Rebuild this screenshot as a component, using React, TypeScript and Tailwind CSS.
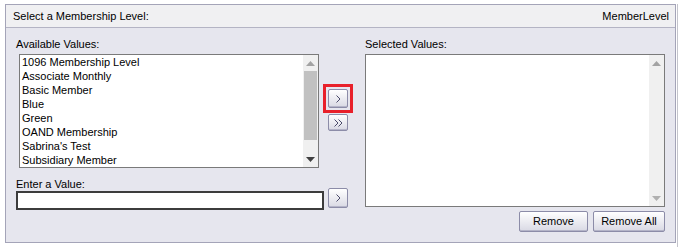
const available = [
  "1096 Membership Level",
  "Associate Monthly",
  "Basic Member",
  "Blue",
  "Green",
  "OAND Membership",
  "Sabrina's Test",
  "Subsidiary Member",
];

function Btn({ children, className = "" }: { children: React.ReactNode; className?: string }) {
  return (
    <button
      className={`flex items-center justify-center rounded-[2px] border border-[#8c8ca8] bg-gradient-to-b from-white to-[#d9d9e4] text-[11px] leading-none text-black shadow-[inset_0_-1px_0_#b4b4c8] ${className}`}
    >
      {children}
    </button>
  );
}

function Chevron() {
  return (
    <svg width="5" height="8" viewBox="0 0 5 8">
      <path d="M0.5 0.5 L4 4 L0.5 7.5" fill="none" stroke="#4a4a6a" strokeWidth="1" />
    </svg>
  );
}

function DoubleChevron() {
  return (
    <svg width="9" height="8" viewBox="0 0 9 8">
      <path d="M0.5 0.5 L4 4 L0.5 7.5 M4.5 0.5 L8 4 L4.5 7.5" fill="none" stroke="#4a4a6a" strokeWidth="1" />
    </svg>
  );
}

function ScrollBar({ active }: { active?: boolean }) {
  return (
    <div className="flex w-[15px] flex-col items-center bg-[#f0f0f0]">
      <div className="flex h-[16px] items-center justify-center">
        <svg width="9" height="5" viewBox="0 0 9 5">
          <path d="M0 5 L4.5 0 L9 5 Z" fill="#a3a3a3" />
        </svg>
      </div>
      <div className="flex-1 w-full px-[1px]">
        {active && <div className="h-[69px] w-full bg-[#c1c1c1]" />}
      </div>
      <div className="flex h-[16px] items-center justify-center">
        <svg width="9" height="5" viewBox="0 0 9 5">
          <path d="M0 0 L9 0 L4.5 5 Z" fill={active ? "#404040" : "#b0b0b0"} />
        </svg>
      </div>
    </div>
  );
}

export default function App() {
  return (
    <div
      className="flex h-[247px] w-[681px] items-start bg-white pl-[5px] pt-[4px] text-black"
      style={{ fontFamily: '"Liberation Sans", Arial, sans-serif' }}
    >
      <div className="flex h-[239px] w-[671px] flex-col border border-[#a4a4b8]">
        <div className="flex h-[23px] items-center justify-between border-b border-[#b4b4c4] bg-[#f0f0f2] pl-[7px] pr-[6px] text-[11px]">
          <span>Select a Membership Level:</span>
          <span>MemberLevel</span>
        </div>

        <div className="flex flex-1 bg-[#e6e6ee] pl-[10px] pt-[9px]">
          {/* left side */}
          <div className="w-[349px]">
            <div className="mb-[3px] h-[14px] text-[11px] leading-[14px]">Available Values:</div>
            <div className="flex">
              <div className="ml-[3px] flex h-[114px] w-[300px] border border-[#7a7a7a] bg-white">
                <div className="flex-1 pl-[2px] text-[11px] leading-[14px]">
                  {available.map((v) => (
                    <div key={v}>{v}</div>
                  ))}
                </div>
                <ScrollBar active />
              </div>
              <div className="ml-[4px] flex flex-col pt-[30px]">
                <div className="border-[3px] border-[#e8202a] p-[2px]">
                  <Btn className="h-[19px] w-[20px]">
                    <Chevron />
                  </Btn>
                </div>
                <Btn className="ml-[5px] mt-[1px] h-[17px] w-[20px]">
                  <DoubleChevron />
                </Btn>
              </div>
            </div>
            <div className="mt-[10px] h-[13px] text-[11px] leading-[13px]">Enter a Value:</div>
            <div className="flex items-start">
              <input className="h-[19px] w-[308px] border-2 border-[#3c3c3c] bg-white outline-none" />
              <Btn className="-mt-[3px] ml-[4px] h-[20px] w-[20px]">
                <Chevron />
              </Btn>
            </div>
          </div>

          {/* right side */}
          <div className="w-[301px]">
            <div className="mb-[3px] h-[14px] text-[11px] leading-[14px]">Selected Values:</div>
            <div className="flex h-[153px] w-[300px] border border-[#7a7a7a] bg-white">
              <div className="flex-1" />
              <ScrollBar />
            </div>
            <div className="mt-[4px] flex justify-end gap-[5px] pr-[1px]">
              <Btn className="h-[21px] w-[69px]">Remove</Btn>
              <Btn className="h-[21px] w-[72px]">Remove All</Btn>
            </div>
          </div>
        </div>
      </div>
      <div className="ml-[1px] h-[243px] w-[1px] bg-[#c4c4cc]" />
    </div>
  );
}
